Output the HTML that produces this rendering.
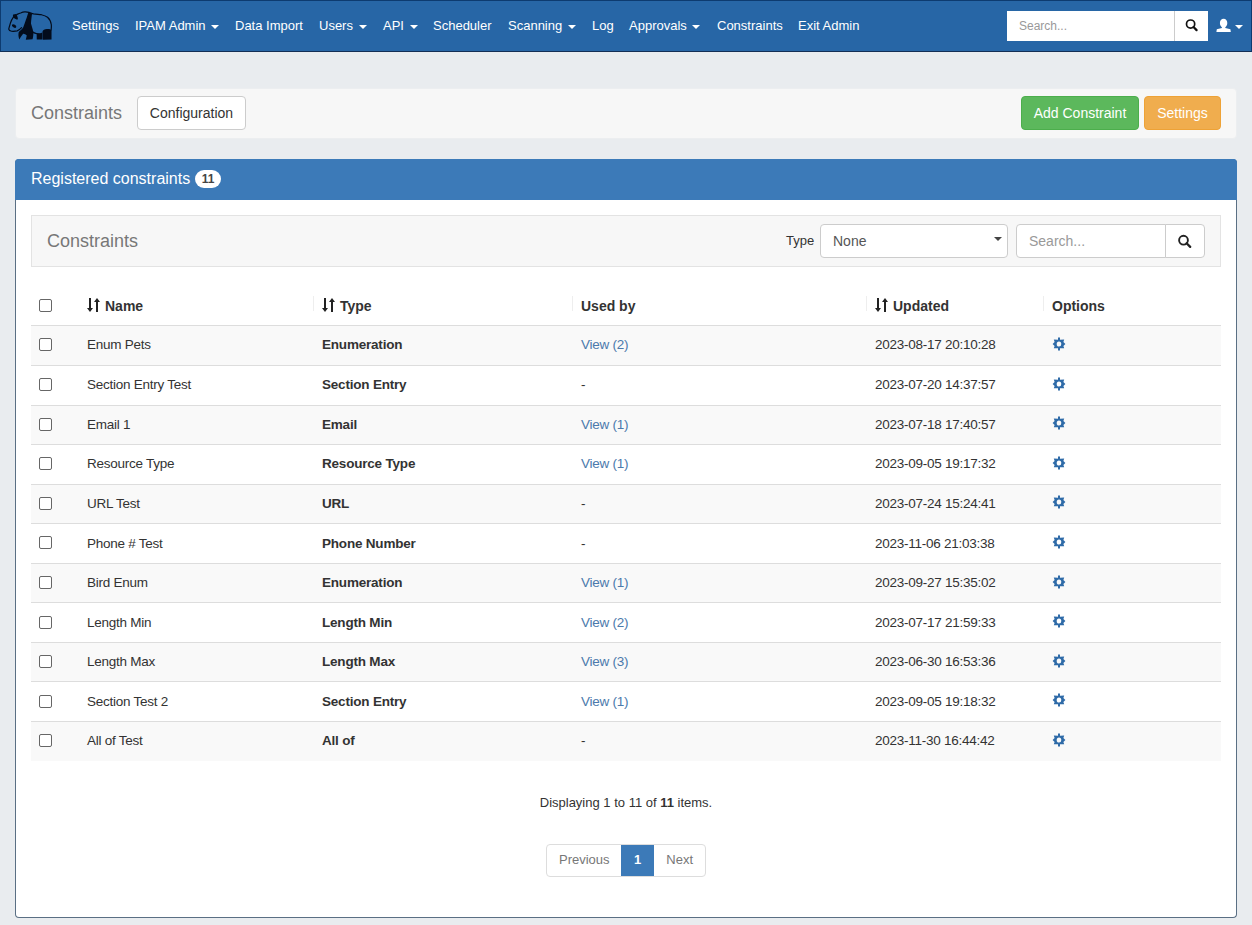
<!DOCTYPE html>
<html><head><meta charset="utf-8">
<style>
*{box-sizing:border-box}
html,body{margin:0;padding:0}
body{width:1252px;height:925px;overflow:hidden;background:#e9ecef;font-family:"Liberation Sans",sans-serif;font-size:14px;color:#333;position:relative}
.abs{position:absolute}
.caret2{position:absolute;width:0;height:0;border-top:4px solid #fff;border-left:4px solid transparent;border-right:4px solid transparent}
#nav{left:0;top:0;width:1252px;height:52px;background:#2766a6;border:1px solid #0d3b70;border-bottom-color:#132f55}
#nav .item{position:absolute;top:17px;font-size:13px;color:#fff;line-height:16px;white-space:nowrap}
.caret{display:inline-block;width:0;height:0;border-top:4px solid #fff;border-left:4px solid transparent;border-right:4px solid transparent;vertical-align:middle;margin-left:2px;position:relative;top:0}
#nsearch{left:1006px;top:10px;width:201px;height:30px;background:#fff;border-radius:0}
#nsearch .ph{position:absolute;left:12px;top:8px;font-size:12px;color:#999;line-height:15px}
#nsearch .sep{position:absolute;left:167px;top:0;width:1px;height:30px;background:#ccc}
#hdr{left:15px;top:88px;width:1222px;height:51px;background:#f7f7f7;border:1px solid #eceef0;border-radius:4px}
.btn{position:absolute;height:34px;border-radius:4px;font-size:14px;line-height:32px;text-align:center;white-space:nowrap}
#panel{left:15px;top:159px;width:1222px;height:759px;background:#fff;border:1px solid #5a6f84;border-color:#3c7ab8 #5a6f84 #5a6f84 #5a6f84;border-radius:4px}
#phead{left:-1px;top:-1px;width:1222px;height:41px;background:#3c7ab8;border-radius:4px 4px 0 0}
.badge{display:inline-block;background:#fff;color:#444;font-size:12px;font-weight:bold;line-height:18px;height:18px;padding:0 6.5px;border-radius:9px;vertical-align:1px;margin-left:5px}
#tool{left:15px;top:55px;width:1190px;height:52px;background:#f7f7f7;border:1px solid #e3e3e3}
.fc{position:absolute;background:#fff;border:1px solid #ccc;height:34px}
table{position:absolute;left:15px;top:125px;width:1190px;border-collapse:collapse;font-size:13px;table-layout:fixed}
td{font-size:13.5px;letter-spacing:-0.25px}
td.b{font-size:13.5px;letter-spacing:-0.2px}
td,th{padding:0 8px;text-align:left;vertical-align:middle;white-space:nowrap}
th{height:40px;font-weight:bold;color:#333;border-bottom:1px solid #ddd;font-size:14px;position:relative;padding-top:2px}
th .cb{top:-2px}
th .sepl{position:absolute;left:-1px;top:11px;width:1px;height:15px;background:#eee}
td{height:39.55px;border-top:1px solid #ddd;padding-bottom:1px}
tbody tr:first-child td{border-top:0;height:40.55px}
tbody tr:nth-child(odd) td{background:#f9f9f9}
td.b{font-weight:bold}
.cb{display:inline-block;width:13px;height:13px;border:1px solid #666;border-radius:2px;background:#fff;vertical-align:middle;position:relative;top:-1px}
a{color:#4c7aac;text-decoration:none}
.gear{display:block;margin-left:0;position:relative;top:-1px}
.sort{display:inline-block;vertical-align:middle;margin-right:5px;position:relative;top:-2px}
#pager{left:530px;top:684px;height:33px;border:1px solid #ddd;border-radius:4px;font-size:13px;color:#777;display:flex;overflow:hidden}
#pager div{line-height:29px;padding:0 12px 2px}
</style></head>
<body>
<svg width="0" height="0" style="position:absolute">
<defs>
<symbol id="cog" viewBox="-7 -7 14 14">
<path fill="#2f6ba8" fill-rule="evenodd" d="M-1 -6.6 L1 -6.6 L1 -4.3 L5.2 -4.4 L4.4 -2.1 L6.4 0 L4.4 2.1 L5.2 4.3 L1 4.3 L1 6.4 L-1 6.4 L-1 4.3 L-5.2 4.3 L-4.4 2.1 L-6.4 0 L-4.4 -2.1 L-5.2 -4.4 L-1 -4.3 Z M0 -2.6 A2.3 2.6 0 1 0 0 2.6 A2.3 2.6 0 1 0 0 -2.6 Z"/>
</symbol>
<symbol id="sortic" viewBox="0 0 13 14">
<g fill="#222">
<rect x="2" y="0" width="2" height="11"/>
<path d="M0 10 L6 10 L3 14 Z"/>
<rect x="9" y="3" width="2" height="11"/>
<path d="M7 4 L13 4 L10 0 Z"/>
</g>
</symbol>
</defs>
</svg>

<div id="nav" class="abs">
  <svg class="abs" style="left:5px;top:7px" width="50" height="36" viewBox="0 0 1252 901">
    <g fill="none" stroke="#030c1c" stroke-width="30" stroke-linejoin="round" stroke-linecap="round">
      <path d="M268 165 C300 150 330 135 366 125 C400 112 430 102 466 98 C510 96 545 100 573 110 C610 125 650 140 690 148 C760 158 820 160 885 168 C950 182 1000 200 1040 232 C1095 280 1125 340 1135 420 C1140 470 1135 510 1130 546"/>
      <path d="M185 230 C150 280 125 330 110 380 C95 430 80 480 68 530 C75 565 100 578 140 582 C180 585 230 584 280 572 C320 560 350 535 390 492"/>
    </g>
    <g fill="#030c1c">
      <path d="M180 165 L250 152 C275 175 290 215 298 270 L282 295 C240 280 205 255 178 232 C170 205 172 185 180 165 Z"/>
      <ellipse cx="203" cy="452" rx="60" ry="36" transform="rotate(30 203 452)"/>
      <path d="M560 112 L655 128 C645 200 630 300 625 390 C640 450 670 520 682 600 C690 660 680 720 665 785 L495 792 C505 760 515 720 520 690 C490 660 450 640 425 648 C395 680 360 740 335 790 C310 730 305 660 318 610 C350 570 400 530 430 490 C455 430 480 350 520 240 C535 190 548 150 560 112 Z"/>
      <path d="M672 585 C700 600 730 620 765 628 L850 632 C875 628 895 615 910 605 L915 790 L770 790 L768 660 C735 650 700 640 680 630 Z"/>
      <path d="M915 590 C925 550 965 527 1025 524 C1085 522 1120 530 1140 560 L1140 790 L925 792 C920 720 915 650 915 590 Z"/>
    </g>
  </svg>
  <div class="item" style="left:71px">Settings</div>
  <div class="item" style="left:134px">IPAM Admin <span class="caret"></span></div>
  <div class="item" style="left:234px">Data Import</div>
  <div class="item" style="left:318px">Users <span class="caret"></span></div>
  <div class="item" style="left:382px">API <span class="caret"></span></div>
  <div class="item" style="left:432px">Scheduler</div>
  <div class="item" style="left:507px">Scanning <span class="caret"></span></div>
  <div class="item" style="left:591px">Log</div>
  <div class="item" style="left:628px">Approvals <span class="caret"></span></div>
  <div class="item" style="left:716px">Constraints</div>
  <div class="item" style="left:797px">Exit Admin</div>
  <div id="nsearch" class="abs"><div class="ph">Search...</div><div class="sep"></div>
    <svg class="abs" style="left:177px;top:7px" width="16" height="16" viewBox="0 0 16 16"><circle cx="6.6" cy="6.1" r="4.1" fill="none" stroke="#111" stroke-width="1.7"/><path d="M9.5 9 L12.6 12.1" stroke="#111" stroke-width="2.2" stroke-linecap="round"/></svg>
  </div>
  <svg class="abs" style="left:1213px;top:14.5px" width="18" height="17" viewBox="0 0 18 17">
    <path fill="#fff" d="M9.6 2.8 C11.8 2.8 13.3 4.6 13.3 7.1 C13.3 9.1 12.4 10.6 11.3 11.3 L11.3 11.9 L16.4 13.3 L16.8 15.9 L2.4 15.9 L2.8 13.3 L7.9 11.9 L7.9 11.3 C6.8 10.6 5.9 9.1 5.9 7.1 C5.9 4.6 7.4 2.8 9.6 2.8 Z"/>
  </svg>
  <span class="caret2" style="left:1234px;top:24px;border-top-color:#fff"></span>
</div>

<div id="hdr" class="abs">
  <div class="abs" style="left:15px;top:14px;font-size:18px;color:#777;line-height:20px">Constraints</div>
  <div class="btn" style="left:121px;top:7px;width:109px;background:#fff;border:1px solid #ccc;color:#333">Configuration</div>
  <div class="btn" style="left:1005px;top:7px;width:118px;background:#5cb85c;border:1px solid #4cae4c;color:#fff">Add Constraint</div>
  <div class="btn" style="left:1128px;top:7px;width:77px;background:#f0ad4e;border:1px solid #eea236;color:#fff">Settings</div>
</div>

<div id="panel" class="abs">
  <div id="phead" class="abs">
    <div class="abs" style="left:16px;top:11px;font-size:16px;color:#fff;line-height:18px;white-space:nowrap">Registered constraints<span class="badge">11</span></div>
  </div>
  <div id="tool" class="abs">
    <div class="abs" style="left:15px;top:15px;font-size:18px;color:#777;line-height:20px">Constraints</div>
    <div class="abs" style="left:754px;top:17px;font-size:13px;color:#333;line-height:16px">Type</div>
    <div class="fc" style="left:788px;top:8px;width:188px;border-radius:4px">
      <div class="abs" style="left:12px;top:8px;font-size:14px;color:#555;line-height:17px">None</div>
      <span class="caret2" style="left:173px;top:12px;border-top-color:#444"></span>
    </div>
    <div class="fc" style="left:984px;top:8px;width:150px;border-radius:4px 0 0 4px">
      <div class="abs" style="left:12px;top:8px;font-size:14px;color:#999;line-height:17px">Search...</div>
    </div>
    <div class="fc" style="left:1133px;top:8px;width:40px;border-radius:0 4px 4px 0">
      <svg class="abs" style="left:11px;top:9px" width="16" height="16" viewBox="0 0 16 16"><circle cx="6.5" cy="6.2" r="4.4" fill="none" stroke="#222" stroke-width="1.9"/><path d="M9.6 9.3 L13.2 12.9" stroke="#222" stroke-width="2.3" stroke-linecap="round"/></svg>
    </div>
  </div>
  <table>
    <colgroup><col style="width:48px"><col style="width:235px"><col style="width:259px"><col style="width:294px"><col style="width:177px"><col></colgroup>
    <thead><tr>
      <th><span class="cb"></span></th>
      <th><svg class="sort" width="13" height="14"><use href="#sortic"/></svg>Name</th>
      <th><span class="sepl"></span><svg class="sort" width="13" height="14"><use href="#sortic"/></svg>Type</th>
      <th><span class="sepl"></span>Used by</th>
      <th><span class="sepl"></span><svg class="sort" width="13" height="14"><use href="#sortic"/></svg>Updated</th>
      <th><span class="sepl"></span>Options</th>
    </tr></thead>
    <tbody>
<tr><td><span class="cb"></span></td><td>Enum Pets</td><td class="b">Enumeration</td><td><a>View (2)</a></td><td>2023-08-17 20:10:28</td><td><svg class="gear" width="14" height="14"><use href="#cog"/></svg></td></tr>
<tr><td><span class="cb"></span></td><td>Section Entry Test</td><td class="b">Section Entry</td><td>-</td><td>2023-07-20 14:37:57</td><td><svg class="gear" width="14" height="14"><use href="#cog"/></svg></td></tr>
<tr><td><span class="cb"></span></td><td>Email 1</td><td class="b">Email</td><td><a>View (1)</a></td><td>2023-07-18 17:40:57</td><td><svg class="gear" width="14" height="14"><use href="#cog"/></svg></td></tr>
<tr><td><span class="cb"></span></td><td>Resource Type</td><td class="b">Resource Type</td><td><a>View (1)</a></td><td>2023-09-05 19:17:32</td><td><svg class="gear" width="14" height="14"><use href="#cog"/></svg></td></tr>
<tr><td><span class="cb"></span></td><td>URL Test</td><td class="b">URL</td><td>-</td><td>2023-07-24 15:24:41</td><td><svg class="gear" width="14" height="14"><use href="#cog"/></svg></td></tr>
<tr><td><span class="cb"></span></td><td>Phone # Test</td><td class="b">Phone Number</td><td>-</td><td>2023-11-06 21:03:38</td><td><svg class="gear" width="14" height="14"><use href="#cog"/></svg></td></tr>
<tr><td><span class="cb"></span></td><td>Bird Enum</td><td class="b">Enumeration</td><td><a>View (1)</a></td><td>2023-09-27 15:35:02</td><td><svg class="gear" width="14" height="14"><use href="#cog"/></svg></td></tr>
<tr><td><span class="cb"></span></td><td>Length Min</td><td class="b">Length Min</td><td><a>View (2)</a></td><td>2023-07-17 21:59:33</td><td><svg class="gear" width="14" height="14"><use href="#cog"/></svg></td></tr>
<tr><td><span class="cb"></span></td><td>Length Max</td><td class="b">Length Max</td><td><a>View (3)</a></td><td>2023-06-30 16:53:36</td><td><svg class="gear" width="14" height="14"><use href="#cog"/></svg></td></tr>
<tr><td><span class="cb"></span></td><td>Section Test 2</td><td class="b">Section Entry</td><td><a>View (1)</a></td><td>2023-09-05 19:18:32</td><td><svg class="gear" width="14" height="14"><use href="#cog"/></svg></td></tr>
<tr><td><span class="cb"></span></td><td>All of Test</td><td class="b">All of</td><td>-</td><td>2023-11-30 16:44:42</td><td><svg class="gear" width="14" height="14"><use href="#cog"/></svg></td></tr>
    </tbody>
  </table>
  <div class="abs" style="left:0;top:635px;width:1220px;text-align:center;font-size:13px;line-height:16px">Displaying 1 to 11 of <b>11</b> items.</div>
  <div id="pager" class="abs">
    <div style="padding:0 11.5px 2px 12px">Previous</div>
    <div style="background:#3c7ab8;color:#fff;font-weight:bold;padding:0 13px 2px">1</div>
    <div>Next</div>
  </div>
</div>
</body></html>
